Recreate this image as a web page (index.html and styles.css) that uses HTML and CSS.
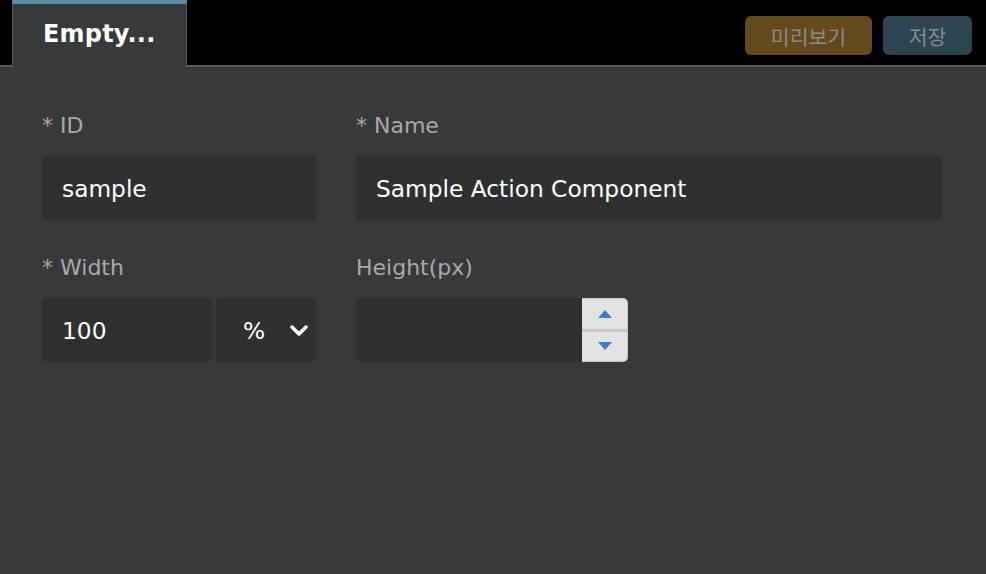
FILE: index.html
```html
<!DOCTYPE html>
<html>
<head>
<meta charset="utf-8">
<link rel="stylesheet" href="styles.css">
</head>
<body>
<div class="topbar">
  <div class="tab">Empty...</div>
  <div class="actions">
    <button class="btn preview">미리보기</button>
    <button class="btn save">저장</button>
  </div>
</div>
<div class="content">
  <div class="row">
    <div class="field small">
      <label class="label">* ID</label>
      <div class="input">sample</div>
    </div>
    <div class="field wide">
      <label class="label">* Name</label>
      <div class="input">Sample Action Component</div>
    </div>
  </div>
  <div class="row">
    <div class="field small">
      <label class="label">* Width</label>
      <div class="combo">
        <div class="input num">100</div>
        <div class="input select">
          <span>%</span>
          <svg class="chev" width="18" height="12" viewBox="0 0 18 12"><path d="M2 2 L9 9 L16 2" fill="none" stroke="#fff" stroke-width="3.5" stroke-linecap="round" stroke-linejoin="round"/></svg>
        </div>
      </div>
    </div>
    <div class="field">
      <label class="label">Height(px)</label>
      <div class="spin-wrap">
        <div class="input height"></div>
        <div class="spinner">
          <div class="spin-btn"><svg width="14" height="8" viewBox="0 0 14 8"><path d="M7 0 L14 8 L0 8 Z" fill="#3b80c4"/></svg></div>
          <div class="spin-btn"><svg width="14" height="8" viewBox="0 0 14 8"><path d="M0 0 L14 0 L7 8 Z" fill="#3b80c4"/></svg></div>
        </div>
      </div>
    </div>
  </div>
</div>
</body>
</html>
```
FILE: styles.css
```css
* { box-sizing: border-box; }
html, body { margin: 0; padding: 0; height: 100%; }
body {
  background: #38393b;
  font-family: "DejaVu Sans", "Noto Sans CJK KR", sans-serif;
  overflow: hidden;
}
.topbar {
  height: 67px;
  background: #000;
  border-bottom: 2px solid #5a5a5c;
  display: flex;
  align-items: flex-start;
  justify-content: space-between;
  padding-left: 12px;
  padding-right: 14px;
}
.tab {
  width: 175px;
  height: 67px;
  background: #38393b;
  border-top: 4px solid #5b8ea4;
  border-left: 1px solid #5a5a5c;
  border-right: 1px solid #5a5a5c;
  color: #fff;
  font-weight: bold;
  font-size: 24px;
  padding-left: 30px;
  padding-top: 16px;
  letter-spacing: 0.2px;
}
.actions {
  display: flex;
  gap: 11px;
  padding-top: 16px;
}
.btn {
  height: 39px;
  border: none;
  border-radius: 6px;
  color: #8a8a8a;
  font-family: "Noto Sans CJK KR", sans-serif;
  font-size: 20.5px;
  padding: 0;
}
.preview { width: 127px; background: #634a1b; }
.save { width: 89px; background: #2c4550; }
.content {
  padding: 46px 0 0 42px;
  display: flex;
  flex-direction: column;
  gap: 35px;
}
.row { display: flex; gap: 40px; }
.field { display: flex; flex-direction: column; gap: 17px; }
.field.small { width: 274px; }
.field.wide { width: 586px; }
.label {
  color: #a9a9aa;
  font-size: 22px;
  height: 26px;
  line-height: 26px;
}
.input {
  height: 64px;
  background: #2f3030;
  border-radius: 4px;
  color: #fff;
  font-size: 23.3px;
  display: flex;
  align-items: center;
  padding-left: 20px;
}
.combo { display: flex; gap: 4px; }
.num { width: 170px; }
.select { width: 100px; padding-left: 27px; padding-right: 8px; justify-content: space-between; }
.chev { margin-top: 2px; }
.spin-wrap { display: flex; }
.height { width: 226px; border-radius: 4px 0 0 4px; }
.spinner {
  width: 46px;
  height: 64px;
  background: #c8c8c8;
  border-radius: 0 5px 5px 0;
  display: flex;
  flex-direction: column;
  gap: 3px;
  padding: 1px 1px 1px 0;
}
.spin-btn {
  flex: 1;
  background: #e3e3e3;
  display: flex;
  align-items: center;
  justify-content: center;
}
.spin-btn:first-child { border-radius: 0 4px 0 0; }
.spin-btn:last-child { border-radius: 0 0 4px 0; }
```
